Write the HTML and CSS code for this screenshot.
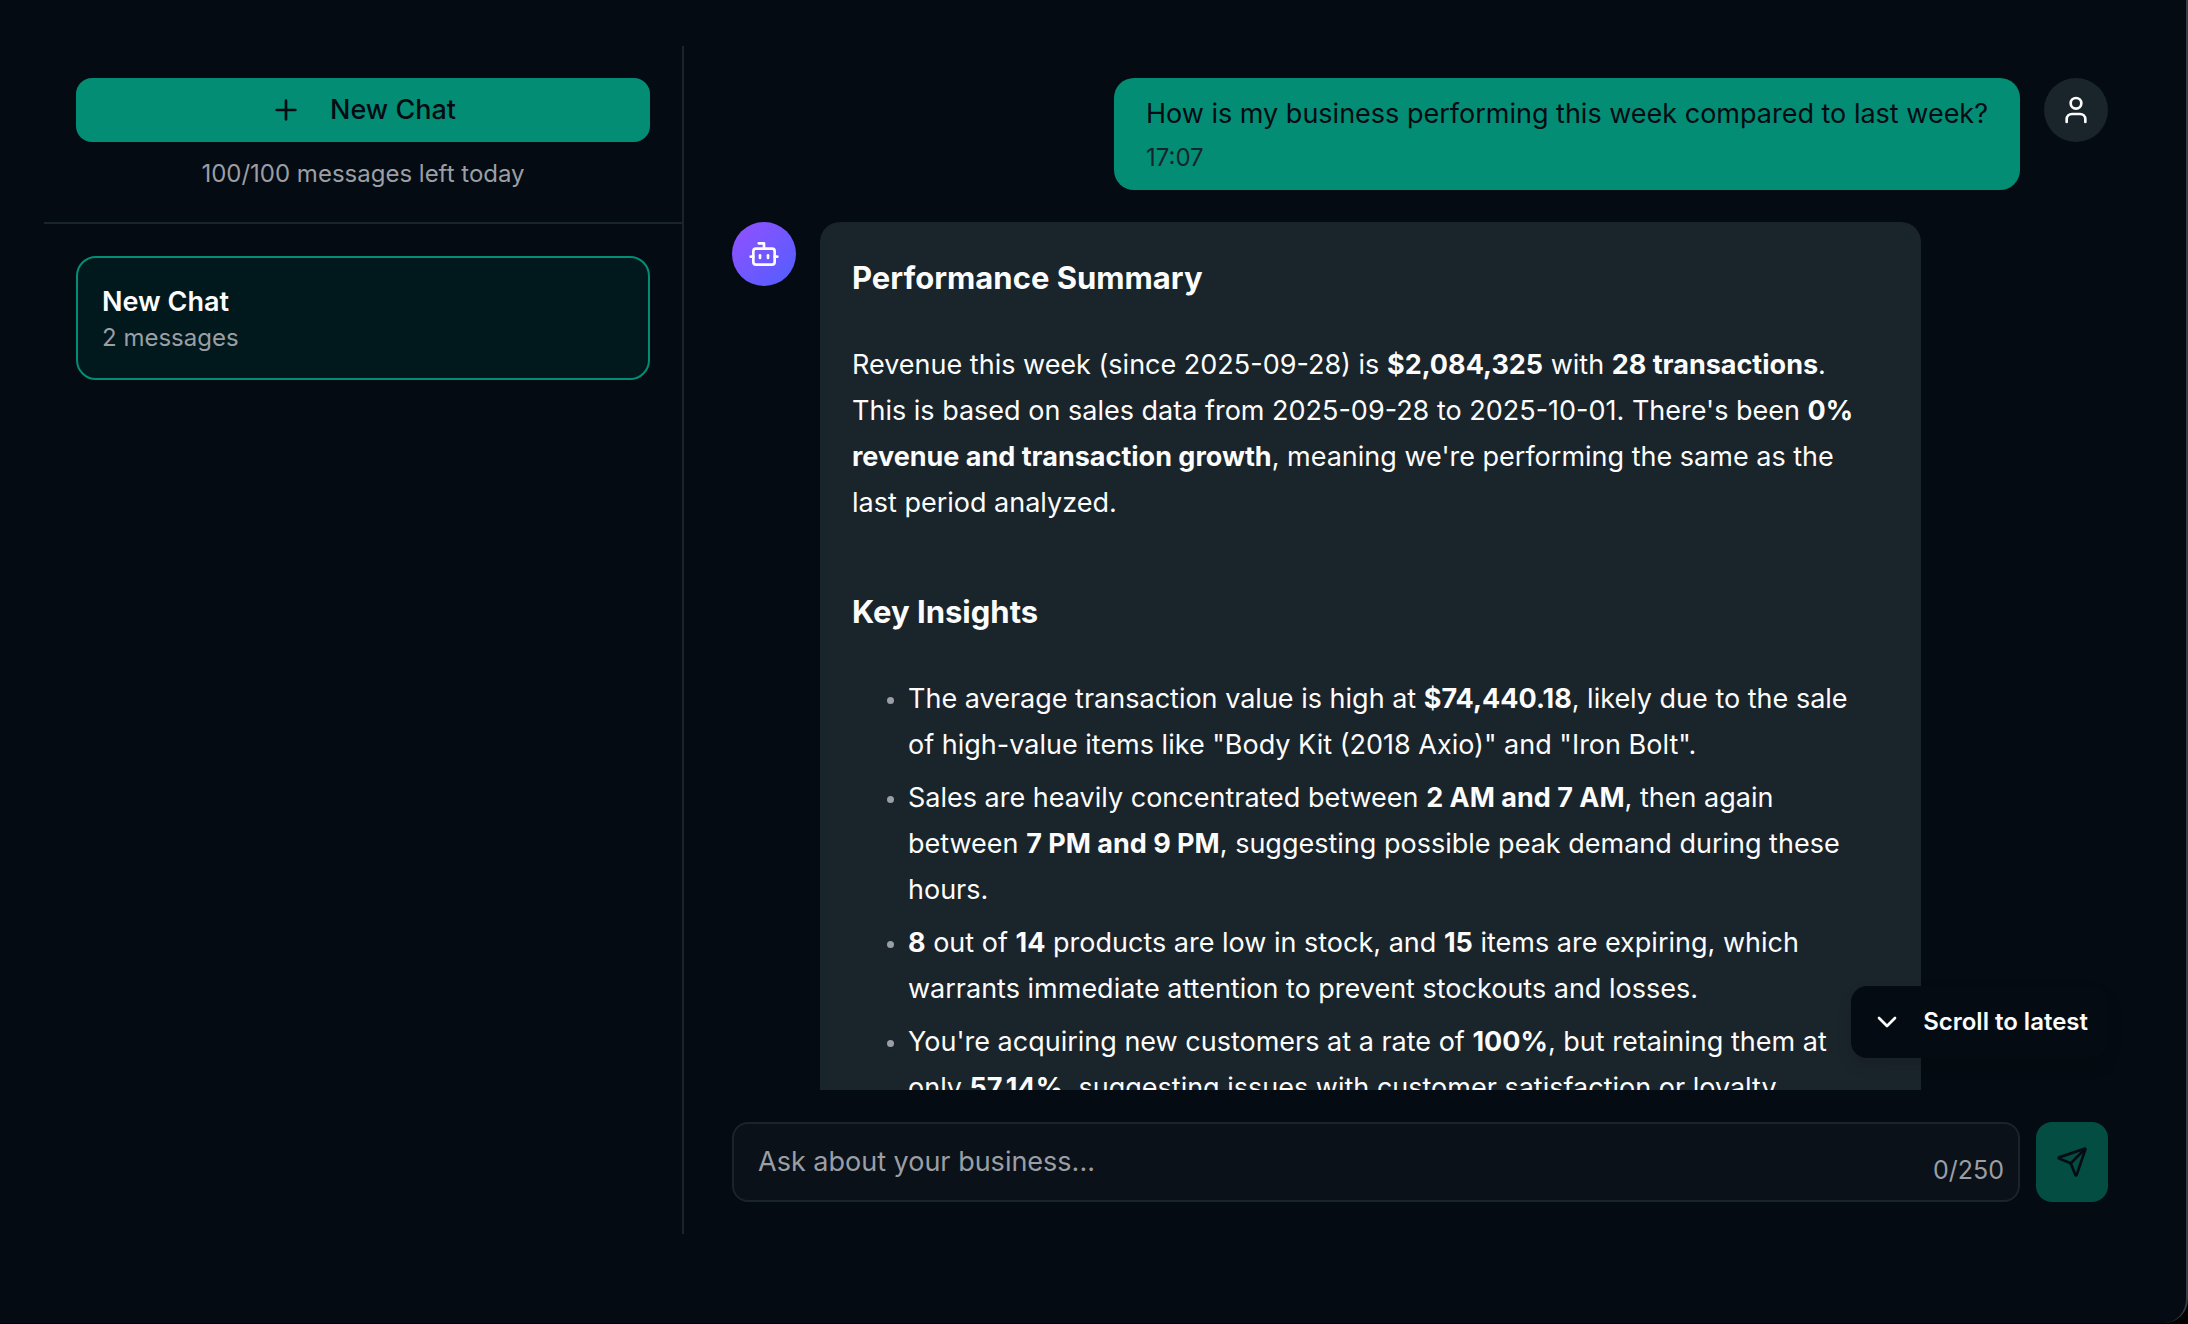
FILE: index.html
```html
<!DOCTYPE html>
<html lang="en">
<head>
  <meta charset="UTF-8">
  <meta name="viewport" content="width=device-width, initial-scale=1.0">
  <title>Business Assistant</title>
  <link rel="stylesheet" href="styles.css">
</head>
<body>
  <div class="page">
    <aside class="sidebar">
      <div class="sidebar-top">
        <button class="new-chat" type="button">
          <svg class="icon" viewBox="0 0 24 24"><path d="M5 12h14"/><path d="M12 5v14"/></svg>
          New Chat
        </button>
        <p class="quota">100/100 messages left today</p>
      </div>
      <nav class="chat-list">
        <a class="chat-item active" href="#">
          <span class="chat-title">New Chat</span>
          <span class="chat-count">2 messages</span>
        </a>
      </nav>
    </aside>

    <main class="chat">
      <div class="messages">
        <div class="message user">
          <div class="bubble">
            <p>How is my business performing this week compared to last week?</p>
            <time class="time">17:07</time>
          </div>
          <div class="avatar">
            <svg class="icon" viewBox="0 0 24 24"><circle cx="12" cy="7" r="4"/><path d="M19 21v-2a4 4 0 0 0-4-4H9a4 4 0 0 0-4 4v2"/></svg>
          </div>
        </div>

        <div class="message bot">
          <div class="avatar">
            <svg class="icon" viewBox="0 0 24 24"><path d="M12 8V4H8"/><rect width="16" height="12" x="4" y="8" rx="2"/><path d="M2 14h2"/><path d="M20 14h2"/><path d="M15 13v2"/><path d="M9 13v2"/></svg>
          </div>
          <div class="bubble">
            <h3>Performance Summary</h3>
            <p>Revenue this week (since 2025-09-28) is <strong>$2,084,325</strong> with <strong>28 transactions</strong>. This is based on sales data from 2025-09-28 to 2025-10-01. There's been <strong>0% revenue and transaction growth</strong>, meaning we're performing the same as the last period analyzed.</p>
            <h3>Key Insights</h3>
            <ul>
              <li>The average transaction value is high at <strong>$74,440.18</strong>, likely due to the sale of high-value items like "Body Kit (2018 Axio)" and "Iron Bolt".</li>
              <li>Sales are heavily concentrated between <strong>2 AM and 7 AM</strong>, then again between <strong>7 PM and 9 PM</strong>, suggesting possible peak demand during these hours.</li>
              <li><strong>8</strong> out of <strong>14</strong> products are low in stock, and <strong>15</strong> items are expiring, which warrants immediate attention to prevent stockouts and losses.</li>
              <li>You're acquiring new customers at a rate of <strong>100%</strong>, but retaining them at only <strong>57.14%</strong>, suggesting issues with customer satisfaction or loyalty.</li>
            </ul>
          </div>
        </div>
      </div>

      <button class="scroll-latest" type="button">
        <svg class="icon" viewBox="0 0 24 24"><path d="m6 9 6 6 6-6"/></svg>
        Scroll to latest
      </button>

      <form class="composer">
        <div class="field">
          <input class="ask" type="text" maxlength="250" placeholder="Ask about your business..." aria-label="Ask about your business">
          <span class="counter">0/250</span>
        </div>
        <button class="send" type="submit" aria-label="Send" disabled>
          <svg class="icon" viewBox="0 0 24 24"><path d="M14.536 21.686a.5.5 0 0 0 .937-.024l6.5-19a.496.496 0 0 0-.635-.635l-19 6.5a.5.5 0 0 0-.024.937l7.93 3.18a2 2 0 0 1 1.112 1.11z"/><path d="m21.854 2.147-10.94 10.939"/></svg>
        </button>
      </form>
    </main>
  </div>
</body>
</html>
```
FILE: styles.css
```css
:root {
  --bg: #040b12;
  --line: #1a242c;
  --panel: #1a242b;
  --input: #0a1119;
  --primary: #048d75;
  --muted: #9b9ea4;
}
* {
  margin: 0;
  padding: 0;
  box-sizing: border-box;
}
body {
  background: #000;
  color: #fcfcfd;
  font-family: Inter, "Liberation Sans", sans-serif;
  font-size: 27px;
  line-height: 40px;
}
button, input {
  font: inherit;
  border: none;
}
.icon {
  width: 32px;
  height: 32px;
  flex: none;
  fill: none;
  stroke: currentColor;
  stroke-width: 2;
  stroke-linecap: round;
  stroke-linejoin: round;
}
.page {
  display: flex;
  height: calc(100vh - 1px);
  padding: 46px 78px 89px 44px;
  border-right: 2px solid #363d44;
  border-bottom-right-radius: 24px;
  background: var(--bg);
}

/* sidebar */
.sidebar {
  flex: 0 0 640px;
  border-right: 2px solid var(--line);
}
.sidebar-top {
  padding: 32px 32px 28px;
  border-bottom: 2px solid var(--line);
}
.new-chat {
  display: flex;
  align-items: center;
  justify-content: center;
  gap: 28px;
  width: 100%;
  height: 64px;
  border-radius: 16px;
  background: var(--primary);
  color: var(--bg);
  font-weight: 500;
}
.quota {
  margin-top: 12px;
  color: var(--muted);
  font-size: 24px;
  text-align: center;
}
.chat-list {
  padding: 32px;
}
.chat-item {
  display: flex;
  flex-direction: column;
  padding: 24px;
  border-radius: 20px;
  color: inherit;
  text-decoration: none;
}
.chat-item.active {
  border: 2px solid var(--primary);
  background: #01191c;
}
.chat-title {
  font-weight: 600;
}
.chat-count {
  color: var(--muted);
  font-size: 24px;
  line-height: 32px;
}

/* conversation */
.chat {
  position: relative;
  display: flex;
  flex-direction: column;
  flex: 1;
  min-width: 0;
  padding: 32px 0 32px 48px;
}
.messages {
  flex: 1;
  min-height: 0;
  overflow: hidden;
}
.message {
  display: flex;
  gap: 24px;
  margin-bottom: 32px;
}
.message.user {
  justify-content: flex-end;
}
.avatar {
  display: flex;
  align-items: center;
  justify-content: center;
  flex: none;
  width: 64px;
  height: 64px;
  border-radius: 50%;
  background: var(--panel);
}
.bot .avatar {
  background: linear-gradient(135deg, #9450ff, #4f5fff);
}
.bubble {
  max-width: 80%;
  padding: 32px;
  border-radius: 20px;
  background: var(--panel);
}
.user .bubble {
  padding: 16px 32px 12px;
  background: var(--primary);
  color: var(--bg);
}
.time {
  display: block;
  margin-top: 4px;
  color: #16262d;
  font-size: 24px;
}
.bot .bubble {
  padding-right: 48px;
  line-height: 46px;
}
.bubble h3 {
  margin-bottom: 40px;
  font-size: 31px;
  font-weight: 700;
  line-height: 48px;
}
.bubble p + h3 {
  margin-top: 62px;
}
.bubble strong {
  font-weight: 700;
}
.bubble ul {
  padding-left: 56px;
}
.bubble li + li {
  margin-top: 7px;
}
.bubble li::marker {
  color: var(--muted);
  font-size: 22px;
}
.scroll-latest {
  position: absolute;
  right: 0;
  bottom: 176px;
  display: flex;
  align-items: center;
  gap: 20px;
  height: 72px;
  padding: 0 20px;
  border-radius: 16px;
  background: var(--bg);
  box-shadow: 0 8px 16px rgba(0, 0, 0, 0.1);
  color: #fcfcfd;
  font-size: 24px;
  font-weight: 600;
}

/* composer */
.composer {
  display: flex;
  gap: 16px;
  margin-top: 32px;
}
.field {
  display: flex;
  flex: 1;
  align-items: flex-end;
  height: 80px;
  padding: 0 14px 0 24px;
  border: 2px solid var(--line);
  border-radius: 16px;
  background: var(--input);
}
.ask {
  flex: 1;
  height: 76px;
  padding-bottom: 2px;
  background: none;
  color: inherit;
  outline: none;
}
.ask::placeholder {
  color: var(--muted);
}
.counter {
  padding-bottom: 10px;
  color: var(--muted);
  font-size: 25px;
}
.send {
  display: flex;
  align-items: center;
  justify-content: center;
  width: 72px;
  height: 80px;
  border-radius: 16px;
  background: #034d43;
  color: var(--bg);
}
```
